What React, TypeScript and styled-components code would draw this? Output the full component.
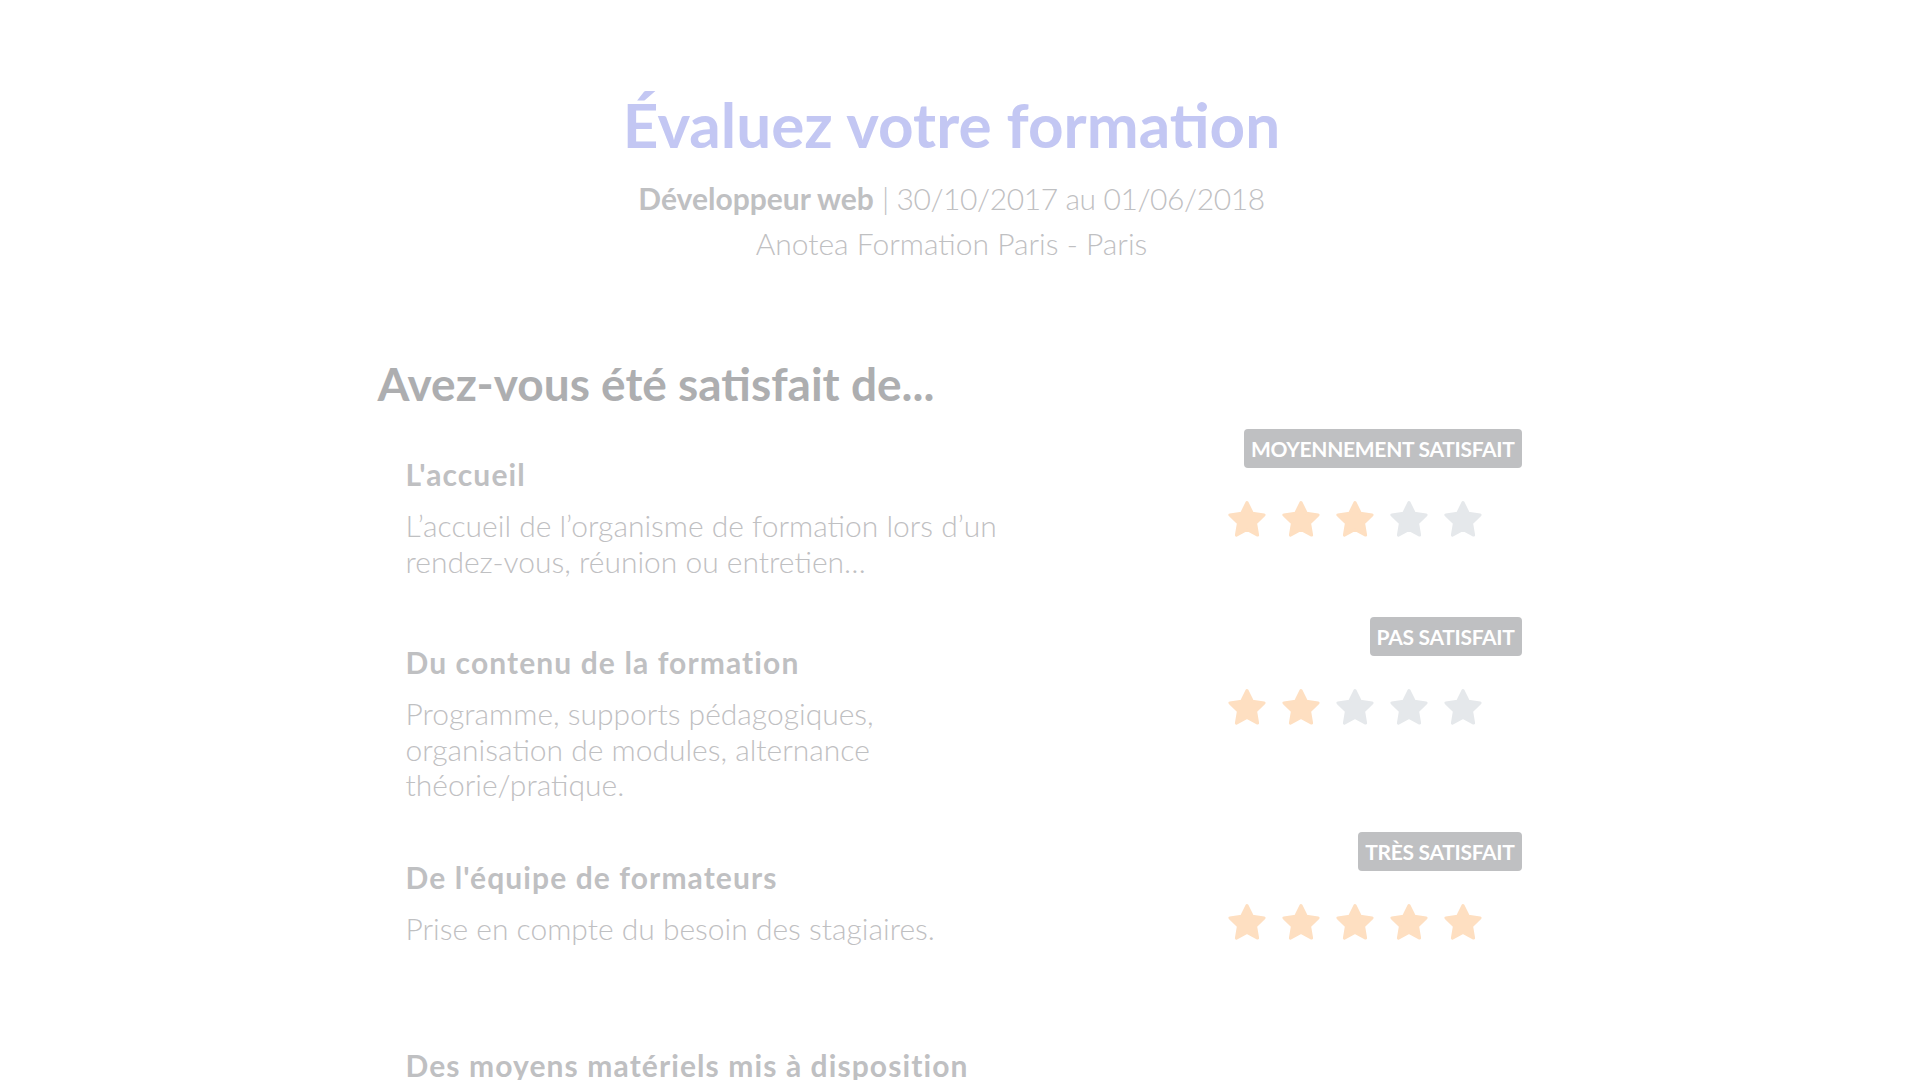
import React from 'react';
import styled, { createGlobalStyle } from 'styled-components';

const GlobalStyle = createGlobalStyle`
  body {
    margin: 0;
    background: #ffffff;
    font-family: Lato, "Open Sans", "Liberation Sans", sans-serif;
    color: #bfc0c2;
  }
`;

// the reference was taken with a vertical scrollbar, so keep its width free
const Page = styled.main`
  padding: 91px 17px 0 0;
`;

const Header = styled.header`
  text-align: center;
`;

const Title = styled.h1`
  margin: 0;
  font-size: 62px;
  line-height: 66px;
  font-weight: 700;
  color: #c3c7f3;
`;

const Subtitle = styled.p`
  margin: 19px 0 0;
  font-size: 30px;
  line-height: 45px;
  font-weight: 300;
  color: #bfc0c2;

  strong {
    font-weight: 700;
  }
`;

const Dates = styled.span`
  letter-spacing: -0.4px;
`;

const Place = styled.p`
  margin: 0;
  font-size: 30px;
  line-height: 45px;
  font-weight: 300;
  color: #bfc0c2;
`;

const Container = styled.section`
  max-width: 1170px;
  margin: 90px auto 0;
  padding: 0 15px;
  box-sizing: border-box;
`;

const SectionTitle = styled.h2`
  margin: 0 0 18px -4px;
  font-size: 46px;
  line-height: 55px;
  font-weight: 700;
  color: #adaeb0;
`;

const Item = styled.div`
  display: grid;
  grid-template-columns: 630px 1fr;
  min-height: 159px;
  margin-bottom: 29px;
  padding-left: 24px;
`;

const Text = styled.div`
  padding-top: 27px;
`;

const ItemTitle = styled.h3`
  margin: 0;
  font-size: 30px;
  line-height: 36px;
  font-weight: 700;
  letter-spacing: 1.1px;
  color: #bfc0c2;
`;

const Description = styled.p`
  margin: 16px 0 0;
  font-size: 30px;
  line-height: 35.5px;
  font-weight: 300;
  color: #bfc0c2;
`;

const Rating = styled.div`
  display: flex;
  flex-direction: column;
  align-items: flex-end;
`;

const Badge = styled.span`
  display: inline-block;
  height: 39px;
  padding: 0 7px;
  border-radius: 4px;
  background: #bfc0c2;
  color: #ffffff;
  font-size: 21px;
  line-height: 39px;
  font-weight: 700;
  letter-spacing: -0.3px;
  text-transform: uppercase;
  box-sizing: border-box;
`;

const BadgeSpace = styled.div`
  height: 39px;
`;

const Stars = styled.div`
  display: flex;
  gap: 14px;
  margin-top: 32px;
  padding-right: 39px;
`;

const StarIcon = styled.svg<{ $on: boolean }>`
  display: block;
  width: 40px;
  height: 38px;
  fill: ${(p) => (p.$on ? '#fedfc1' : '#e5e8eb')};
  stroke: ${(p) => (p.$on ? '#fedfc1' : '#e5e8eb')};
`;

const Star = ({ on }: { on: boolean }) => (
  <StarIcon $on={on} viewBox="0 0 40 38">
    <polygon
      points="20,2.5 25.3,13.2 37.1,14.9 28.6,23.3 30.6,35.1 20,29.5 9.4,35.1 11.4,23.3 2.9,14.9 14.7,13.2"
      strokeWidth="3"
      strokeLinejoin="round"
    />
  </StarIcon>
);

type Question = {
  title: string;
  description: string;
  rating: number;
  label?: string;
};

const questions: Question[] = [
  {
    title: "L'accueil",
    description: 'L’accueil de l’organisme de formation lors d’un rendez-vous, réunion ou entretien…',
    rating: 3,
    label: 'Moyennement satisfait',
  },
  {
    title: 'Du contenu de la formation',
    description: 'Programme, supports pédagogiques, organisation de modules, alternance théorie/pratique.',
    rating: 2,
    label: 'Pas satisfait',
  },
  {
    title: "De l'équipe de formateurs",
    description: 'Prise en compte du besoin des stagiaires.',
    rating: 5,
    label: 'Très satisfait',
  },
  {
    title: 'Des moyens matériels mis à disposition',
    description: 'Salles de cours, documentation, plateaux techniques, équipement informatique…',
    rating: 0,
  },
  {
    title: "De l'accompagnement",
    description: 'Aide à la recherche de stage, mise en relation avec des entreprises.',
    rating: 0,
  },
];

const App: React.FC = () => {
  return (
    <>
      <GlobalStyle />
      <Page>
        <Header>
          <Title>Évaluez votre formation</Title>
          <Subtitle>
            <strong>Développeur web</strong> <Dates>| 30/10/2017 au 01/06/2018</Dates>
          </Subtitle>
          <Place>Anotea Formation Paris - Paris</Place>
        </Header>

        <Container>
          <SectionTitle>Avez-vous été satisfait de...</SectionTitle>
          {questions.map((q) => (
            <Item key={q.title}>
              <Text>
                <ItemTitle>{q.title}</ItemTitle>
                <Description>{q.description}</Description>
              </Text>
              <Rating>
                {q.label ? <Badge>{q.label}</Badge> : <BadgeSpace />}
                <Stars>
                  {[1, 2, 3, 4, 5].map((n) => (
                    <Star key={n} on={n <= q.rating} />
                  ))}
                </Stars>
              </Rating>
            </Item>
          ))}
        </Container>
      </Page>
    </>
  );
};

export default App;
